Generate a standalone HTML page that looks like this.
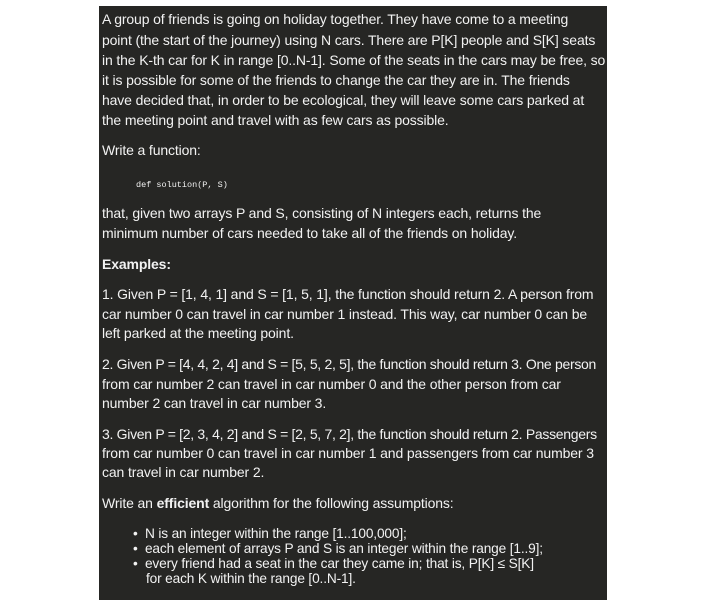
<!DOCTYPE html>
<html><head><meta charset="utf-8"><style>
body{margin:0;width:710px;height:605px;background:#fff;overflow:hidden;font-family:"Liberation Sans",Arial,sans-serif;}
#b{position:absolute;left:99px;top:6px;width:508px;height:594px;background:#262624;}
.l{position:absolute;left:102px;white-space:nowrap;color:#f2f2f2;font-size:14px;letter-spacing:-0.13px;line-height:16px;}
.c{font-family:"Liberation Mono",monospace;font-size:8.5px;letter-spacing:0;left:136px;}
.bu{left:133px;font-size:13.7px;letter-spacing:-0.15px;}
.bu2{left:146px;font-size:13.7px;letter-spacing:-0.15px;}
</style></head><body>
<div id="b"></div>
<div class="l" style="top:11px">A group of friends is going on holiday together. They have come to a meeting</div>
<div class="l" style="top:32px">point (the start of the journey) using N cars. There are P[K] people and S[K] seats</div>
<div class="l" style="top:52px">in the K-th car for K in range [0..N-1]. Some of the seats in the cars may be free, so</div>
<div class="l" style="top:72px">it is possible for some of the friends to change the car they are in. The friends</div>
<div class="l" style="top:92px">have decided that, in order to be ecological, they will leave some cars parked at</div>
<div class="l" style="top:112px">the meeting point and travel with as few cars as possible.</div>
<div class="l" style="top:142px">Write a function:</div>
<div class="l c" style="top:177px">def solution(P, S)</div>
<div class="l" style="top:205px">that, given two arrays P and S, consisting of N integers each, returns the</div>
<div class="l" style="top:225px">minimum number of cars needed to take all of the friends on holiday.</div>
<div class="l" style="top:256px"><b>Examples:</b></div>
<div class="l" style="top:286px">1. Given P = [1, 4, 1] and S = [1, 5, 1], the function should return 2. A person from</div>
<div class="l" style="top:306px">car number 0 can travel in car number 1 instead. This way, car number 0 can be</div>
<div class="l" style="top:325px">left parked at the meeting point.</div>
<div class="l" style="top:356px;letter-spacing:-0.3px">2. Given P = [4, 4, 2, 4] and S = [5, 5, 2, 5], the function should return 3. One person</div>
<div class="l" style="top:376px">from car number 2 can travel in car number 0 and the other person from car</div>
<div class="l" style="top:395px">number 2 can travel in car number 3.</div>
<div class="l" style="top:426px;letter-spacing:-0.3px">3. Given P = [2, 3, 4, 2] and S = [2, 5, 7, 2], the function should return 2. Passengers</div>
<div class="l" style="top:445px">from car number 0 can travel in car number 1 and passengers from car number 3</div>
<div class="l" style="top:464px">can travel in car number 2.</div>
<div class="l" style="top:495px">Write an <b>efficient</b> algorithm for the following assumptions:</div>
<div class="l bu" style="top:526px">•&nbsp; N is an integer within the range [1..100,000];</div>
<div class="l bu" style="top:541px">•&nbsp; each element of arrays P and S is an integer within the range [1..9];</div>
<div class="l bu" style="top:556px">•&nbsp; every friend had a seat in the car they came in; that is, P[K] ≤ S[K]</div>
<div class="l bu2" style="top:571px">for each K within the range [0..N-1].</div>
</body></html>
